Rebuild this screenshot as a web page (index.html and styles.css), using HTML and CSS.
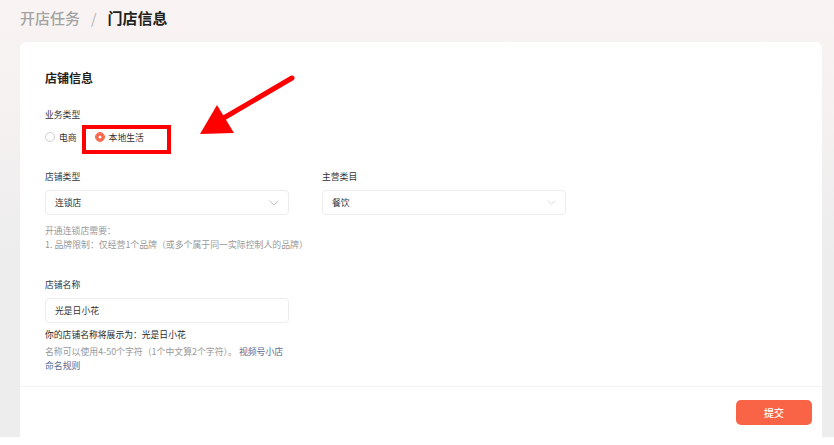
FILE: index.html
```html
<!DOCTYPE html>
<html lang="zh-CN">
<head>
    <meta charset="UTF-8">
    <meta name="viewport" content="width=device-width, initial-scale=1.0">
    <title>门店信息</title>
    <link rel="stylesheet" href="styles.css">
</head>
<body>
    <div class="page">
        <div class="breadcrumb">
            <span class="crumb">开店任务</span>
            <span class="sep">/</span>
            <span class="crumb current">门店信息</span>
        </div>

        <div class="card">
            <div class="card-body">
                <h2 class="section-title">店铺信息</h2>

                <div class="field">
                    <div class="label">业务类型</div>
                    <div class="radio-group">
                        <label class="radio"><span class="dot"></span>电商</label>
                        <label class="radio checked"><span class="dot"></span>本地生活</label>
                    </div>
                </div>

                <div class="row">
                    <div class="field col">
                        <div class="label">店铺类型</div>
                        <div class="select">
                            <span>连锁店</span>
                            <svg class="chevron" width="10" height="6" viewBox="0 0 10 6"><path d="M0.5 0.8 L5 5 L9.5 0.8" fill="none" stroke="#b5b5b5" stroke-width="0.9"/></svg>
                        </div>
                    </div>
                    <div class="field col">
                        <div class="label">主营类目</div>
                        <div class="select">
                            <span>餐饮</span>
                            <svg class="chevron" width="9" height="5" viewBox="0 0 10 6"><path d="M0.5 0.8 L5 5 L9.5 0.8" fill="none" stroke="#d0d0d0" stroke-width="0.9"/></svg>
                        </div>
                    </div>
                </div>

                <div class="help">
                    开通连锁店需要：<br>
                    1. 品牌限制：仅经营1个品牌（或多个属于同一实际控制人的品牌）
                </div>

                <div class="field name-field">
                    <div class="label">店铺名称</div>
                    <div class="input">光是日小花</div>
                    <div class="preview">你的店铺名称将展示为：光是日小花</div>
                    <div class="help narrow">名称可以使用4-50个字符（1个中文算2个字符）。 <a href="#" class="link">视频号小店<br>命名规则</a></div>
                </div>
            </div>
            <div class="card-footer">
                <button type="button" class="btn-submit">提交</button>
            </div>
        </div>

        <svg class="annotation" width="834" height="445" viewBox="0 0 834 445">
            <rect x="84" y="127" width="85" height="25" fill="none" stroke="#ff0000" stroke-width="4"/>
            <line x1="292" y1="78" x2="222" y2="119" stroke="#ff0000" stroke-width="5" stroke-linecap="round"/>
            <polygon points="200,134 217,105 234,133" fill="#ff0000"/>
        </svg>
    </div>
</body>
</html>
```

FILE: styles.css
```css
:root {
    --text-color: #333333;
    --muted-color: #999999;
    --border-color: #ececec;
    --primary-color: #fa6446;
    --link-color: #576b95;
}

body {
    margin: 0;
    background: #ffffff;
    font-family: "Noto Sans CJK SC", "Noto Sans", sans-serif;
    color: var(--text-color);
}

.page {
    position: relative;
    height: 437px;
    padding: 0 12px 0 20px;
    background: linear-gradient(180deg, #f9f4f3 0, #f4f1f0 120px, #ededed 260px);
    overflow: hidden;
}

.breadcrumb {
    height: 42px;
    display: flex;
    align-items: center;
    gap: 11px;
    padding-bottom: 7px;
    box-sizing: border-box;
    font-size: 15px;
}

.crumb {
    color: #a3a3a3;
    font-weight: 500;
}

.sep {
    color: #b0b0b0;
    font-size: 14px;
}

.crumb.current {
    color: #1f1f1f;
    font-weight: 700;
}

.card {
    background: white;
    border-radius: 6px 6px 0 0;
    height: 395px;
    display: flex;
    flex-direction: column;
}

.card-body {
    padding: 28px 25px 0;
    flex: 1;
}

.section-title {
    margin: 0 0 22px;
    font-size: 12px;
    line-height: 16px;
    font-weight: 700;
    color: #222;
}

.label {
    font-size: 8.8px;
    line-height: 13px;
    color: var(--text-color);
}

.radio-group {
    display: flex;
    gap: 18px;
    margin-top: 9px;
    height: 14px;
    align-items: center;
}

.radio {
    display: flex;
    align-items: center;
    gap: 4px;
    font-size: 8.8px;
    color: var(--text-color);
}

.radio .dot {
    width: 8px;
    height: 8px;
    border: 1px solid #cfcfcf;
    border-radius: 50%;
    background: white;
}

.radio.checked .dot {
    border-color: var(--primary-color);
    box-shadow: inset 0 0 0 2.5px var(--primary-color);
    background: white;
}

.row {
    display: flex;
    gap: 33px;
    margin-top: 26px;
}

.col {
    width: 244px;
}

.select,
.input {
    width: 244px;
    margin-top: 7px;
    height: 25px;
    box-sizing: border-box;
    border: 1px solid var(--border-color);
    border-radius: 4px;
    padding: 0 9px;
    display: flex;
    align-items: center;
    justify-content: space-between;
    font-size: 8.8px;
    color: var(--text-color);
}

.help {
    margin-top: 9px;
    font-size: 8.9px;
    line-height: 14px;
    color: var(--muted-color);
}

.name-field {
    margin-top: 26px;
}

.preview {
    margin-top: 5px;
    font-size: 8.8px;
    line-height: 14px;
    color: #2a2a2a;
}

.help.narrow {
    margin-top: 3px;
    white-space: nowrap;
}

.link {
    color: var(--link-color);
    text-decoration: none;
}

.card-footer {
    border-top: 1px solid #f3f3f3;
    height: 51px;
    box-sizing: border-box;
    display: flex;
    justify-content: flex-end;
    align-items: flex-start;
    padding: 13px 10px 0 0;
}

.btn-submit {
    width: 76px;
    height: 25px;
    border: none;
    border-radius: 5px;
    background: var(--primary-color);
    color: white;
    font-family: inherit;
    font-size: 10px;
    font-weight: 500;
    cursor: pointer;
}

.annotation {
    position: absolute;
    left: 0;
    top: 0;
    pointer-events: none;
}
```
